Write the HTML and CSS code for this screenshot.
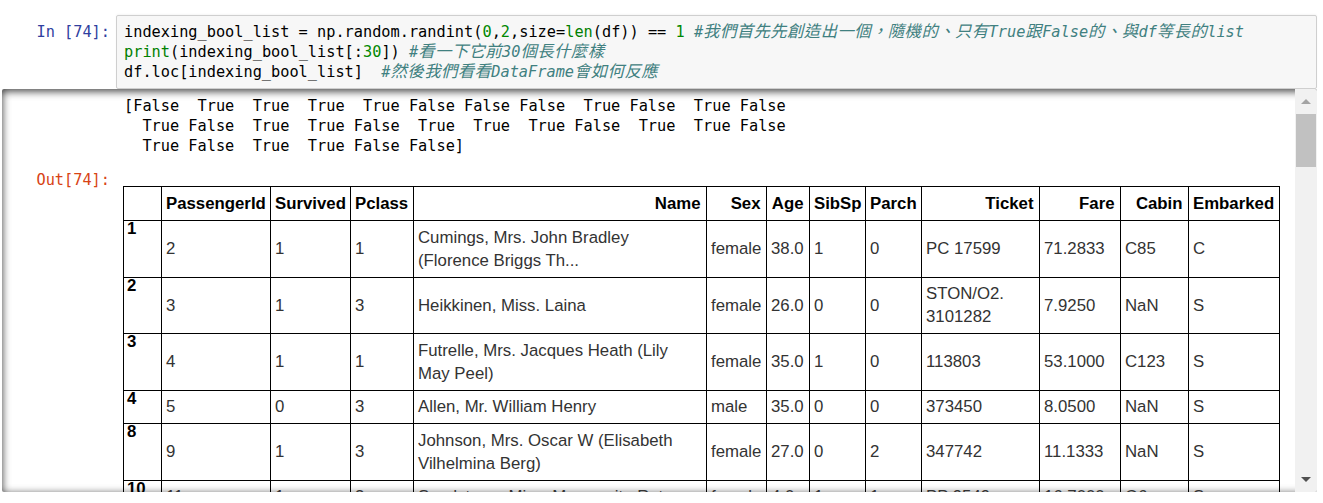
FILE: index.html
```html
<!DOCTYPE html>
<html lang="zh-Hant">
<head>
<meta charset="utf-8">
<title>Notebook cell</title>
<link rel="stylesheet" href="styles.css">
</head>
<body>
<div class="notebook">
  <div class="cell-input">
    <div class="prompt prompt-in">In&nbsp;[74]:</div>
    <div class="input-area">
      <div class="code-line">indexing_bool_list = np.random.randint(<span class="num">0</span>,<span class="num">2</span>,size=<span class="bi">len</span>(df)) == <span class="num">1</span> <span class="cm">#<span class="cj">我們首先先創造出一個，隨機的、只有</span>True<span class="cj">跟</span>False<span class="cj">的、與</span>df<span class="cj">等長的</span>list</span></div>
      <div class="code-line"><span class="bi">print</span>(indexing_bool_list[:<span class="num">30</span>]) <span class="cm">#<span class="cj">看一下它前</span>30<span class="cj">個長什麼樣</span></span></div>
      <div class="code-line">df.loc[indexing_bool_list]  <span class="cm">#<span class="cj">然後我們看看</span>DataFrame<span class="cj">會如何反應</span></span></div>
    </div>
  </div>

  <div class="output-scroll">
    <div class="output-content">
      <div class="out-row">
        <div class="prompt"></div>
        <pre class="stream">[False  True  True  True  True False False False  True False  True False
  True False  True  True False  True  True  True False  True  True False
  True False  True  True False False]</pre>
      </div>
      <div class="out-row">
        <div class="prompt prompt-out">Out[74]:</div>
        <div class="result">
          <table class="df">
            <colgroup>
              <col class="c-idx"><col class="c-pid"><col class="c-surv"><col class="c-pcl"><col class="c-name"><col class="c-sex"><col class="c-age"><col class="c-sib"><col class="c-par"><col class="c-tic"><col class="c-fare"><col class="c-cab"><col class="c-emb">
            </colgroup>
            <thead>
              <tr><th></th><th>PassengerId</th><th>Survived</th><th>Pclass</th><th>Name</th><th>Sex</th><th>Age</th><th>SibSp</th><th>Parch</th><th>Ticket</th><th>Fare</th><th>Cabin</th><th>Embarked</th></tr>
            </thead>
            <tbody>
              <tr><th>1</th><td>2</td><td>1</td><td>1</td><td>Cumings, Mrs. John Bradley (Florence Briggs Th...</td><td>female</td><td>38.0</td><td>1</td><td>0</td><td>PC 17599</td><td>71.2833</td><td>C85</td><td>C</td></tr>
              <tr><th>2</th><td>3</td><td>1</td><td>3</td><td>Heikkinen, Miss. Laina</td><td>female</td><td>26.0</td><td>0</td><td>0</td><td>STON/O2. 3101282</td><td>7.9250</td><td>NaN</td><td>S</td></tr>
              <tr><th>3</th><td>4</td><td>1</td><td>1</td><td>Futrelle, Mrs. Jacques Heath (Lily May Peel)</td><td>female</td><td>35.0</td><td>1</td><td>0</td><td>113803</td><td>53.1000</td><td>C123</td><td>S</td></tr>
              <tr><th>4</th><td>5</td><td>0</td><td>3</td><td>Allen, Mr. William Henry</td><td>male</td><td>35.0</td><td>0</td><td>0</td><td>373450</td><td>8.0500</td><td>NaN</td><td>S</td></tr>
              <tr><th>8</th><td>9</td><td>1</td><td>3</td><td>Johnson, Mrs. Oscar W (Elisabeth Vilhelmina Berg)</td><td>female</td><td>27.0</td><td>0</td><td>2</td><td>347742</td><td>11.1333</td><td>NaN</td><td>S</td></tr>
              <tr><th>10</th><td>11</td><td>1</td><td>3</td><td>Sandstrom, Miss. Marguerite Rut</td><td>female</td><td>4.0</td><td>1</td><td>1</td><td>PP 9549</td><td>16.7000</td><td>G6</td><td>S</td></tr>
            </tbody>
          </table>
        </div>
      </div>
    </div>
    <div class="scrollbar">
      <div class="sb-btn"><span class="arrow-up"></span></div>
      <div class="sb-thumb"></div>
      <div class="sb-track"></div>
      <div class="sb-btn"><span class="arrow-down"></span></div>
    </div>
  </div>
</div>
</body>
</html>
```

FILE: styles.css
```css
html, body {
  margin: 0;
  padding: 0;
  background: #ffffff;
}

body {
  width: 1323px;
  height: 503px;
  overflow: hidden;
  font-family: "Liberation Sans", Arial, sans-serif;
}

.notebook {
  padding-top: 15px;
}

pre {
  margin: 0;
}

.prompt,
.code-line,
.stream {
  font-family: "DejaVu Sans Mono", "Noto Sans CJK TC", monospace;
  font-size: 15.28px;
  line-height: 20px;
}

.cell-input {
  display: flex;
  padding-right: 6px;
}

.prompt {
  flex: 0 0 auto;
  width: 116px;
  box-sizing: border-box;
  padding-right: 6px;
  text-align: right;
  white-space: nowrap;
}

.prompt-in {
  color: #303f9f;
  padding-top: 7px;
}

.prompt-out {
  color: #d84315;
  padding-top: 14px;
  width: 114px;
  padding-right: 6px;
}

.input-area {
  flex: 1 1 auto;
  display: flex;
  flex-direction: column;
  background: #f7f7f7;
  border: 1px solid #cfcfcf;
  border-radius: 2px;
  padding: 6px 7px;
  box-shadow: 0 -1px 2px rgba(0, 0, 0, 0.04);
}

.code-line {
  height: 20px;
  color: #000;
  white-space: pre;
  overflow: visible;
}

.num { color: #008800; }
.bi { color: #008000; }
.cm {
  color: #408080;
  font-style: italic;
}
.cj {
  font-family: "Noto Sans CJK TC", sans-serif;
  font-size: 16.4px;
  line-height: 12px;
  letter-spacing: 0.4px;
}

/* output */
.output-scroll {
  display: flex;
  margin-left: 2px;
  margin-right: 6px;
  height: 403px;
  border-radius: 2px;
  overflow: hidden;
  box-shadow: inset 0 2px 8px rgba(0, 0, 0, 0.8);
}

.output-content {
  flex: 1 1 auto;
  overflow: hidden;
  min-width: 0;
}

.out-row {
  display: flex;
}

.out-row .prompt:empty {
  width: 114px;
}

.stream {
  padding-top: 7px;
  padding-left: 8px;
  color: #000;
}

.result {
  padding-left: 7px;
  padding-top: 30px;
}

/* dataframe table */
.df {
  border-collapse: collapse;
  table-layout: fixed;
  width: 1156px;
  font-family: "Liberation Sans", Arial, sans-serif;
  font-size: 16.8px;
  color: #000;
}

.c-idx { width: 38px; }
.c-pid { width: 109px; }
.c-surv { width: 80px; }
.c-pcl { width: 63px; }
.c-name { width: 293px; }
.c-sex { width: 60px; }
.c-age { width: 43px; }
.c-sib { width: 56px; }
.c-par { width: 56px; }
.c-tic { width: 118px; }
.c-fare { width: 81px; }
.c-cab { width: 68px; }
.c-emb { width: 91px; }

.df th,
.df td {
  border: 1px solid #000;
  padding: 4.75px 5px 4.75px 4px;
  line-height: 23px;
  overflow: visible;
  white-space: normal;
}

.df thead th {
  text-align: right;
  font-weight: bold;
  padding-top: 5px;
  padding-bottom: 5px;
  padding-right: 5.5px;
  vertical-align: middle;
  white-space: nowrap;
}

.df tbody th {
  text-align: left;
  font-weight: bold;
  vertical-align: top;
  padding-top: 0;
  padding-left: 3px;
  line-height: 16px;
}

.df td {
  text-align: left;
  vertical-align: middle;
  color: #333;
}

/* scrollbar */
.scrollbar {
  flex: 0 0 22px;
  display: flex;
  flex-direction: column;
  background: #f1f1f1;
}

.sb-btn {
  flex: 0 0 25px;
  display: flex;
  align-items: center;
  justify-content: center;
}

.arrow-up {
  width: 0;
  height: 0;
  border-left: 5px solid transparent;
  border-right: 5px solid transparent;
  border-bottom: 5px solid #a3a3a3;
}

.arrow-down {
  width: 0;
  height: 0;
  border-left: 5px solid transparent;
  border-right: 5px solid transparent;
  border-top: 5px solid #505050;
}

.sb-thumb {
  flex: 0 0 53px;
  margin: 0 1px;
  background: #c1c1c1;
}

.sb-track {
  flex: 1 1 auto;
}
```
